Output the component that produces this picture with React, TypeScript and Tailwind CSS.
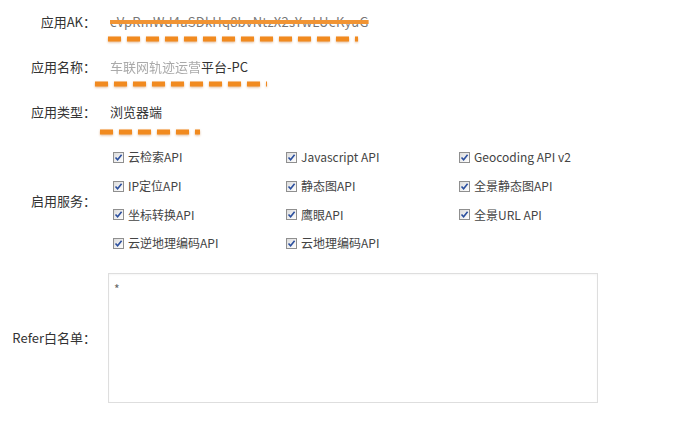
import type { ReactNode } from "react";

const services = [
  "云检索API",
  "Javascript API",
  "Geocoding API v2",
  "IP定位API",
  "静态图API",
  "全景静态图API",
  "坐标转换API",
  "鹰眼API",
  "全景URL API",
  "云逆地理编码API",
  "云地理编码API",
];

export default function App() {
  return (
    <main
      className="min-h-screen bg-white text-[13px] text-[#333] pt-[12px]"
      style={{ fontFamily: '"Microsoft YaHei", "Noto Sans CJK SC", "Liberation Sans", sans-serif' }}
    >
      <Row label="应用AK：">
        <span className="text-[#777] line-through decoration-[#f19433] decoration-[4px] tracking-[0.2px]">
          cVpRmWd4aSDkHq8bvNtzX2sYwLUeKyuG
        </span>
      </Row>
      <Dashes from={108} to={358} />

      <div className="mt-[11px]">
        <Row label="应用名称：">
          <span className="text-[#aaa] blur-[0.5px]">车联网轨迹运营</span>
          <span>平台-PC</span>
        </Row>
      </div>
      <Dashes from={95} to={267} />

      <div className="mt-[11px]">
        <Row label="应用类型：">
          <span>浏览器端</span>
        </Row>
      </div>
      <div className="mt-[3px]">
        <Dashes from={100} to={200} />
      </div>

      <div className="flex items-center mt-[4px]">
        <div className="w-[96px] shrink-0 text-right">启用服务：</div>
        <div className="ml-[17px] grid grid-cols-[173px_173px_173px]">
          {services.map((s) => (
            <label key={s} className="flex items-center h-[28.7px] text-[12px] text-[#444]">
              <CheckBox />
              <span className="ml-[4px]">{s}</span>
            </label>
          ))}
        </div>
      </div>

      <div className="flex items-center mt-[15px]">
        <div className="w-[96px] shrink-0 text-right">Refer白名单：</div>
        <textarea
          readOnly
          defaultValue="*"
          className="ml-[12px] w-[490px] h-[130px] resize-none border border-[#dedede] px-[5px] py-[6px] text-[12px] text-[#666] outline-none shadow-[inset_0_1px_2px_rgba(0,0,0,0.04)]"
        />
      </div>
    </main>
  );
}

function Row({ label, children }: { label: string; children: ReactNode }) {
  return (
    <div className="flex items-center h-[20px]">
      <div className="w-[96px] shrink-0 text-right">{label}</div>
      <div className="ml-[14px] whitespace-nowrap">{children}</div>
    </div>
  );
}

function Dashes({ from, to }: { from: number; to: number }) {
  return (
    <svg width="675" height="14" className="block drop-shadow-[0_1px_1px_rgba(190,100,20,0.45)]">
      <line
        x1={from}
        y1={7}
        x2={to}
        y2={7}
        stroke="#f18a1f"
        strokeWidth={5}
        strokeDasharray="13 6"
      />
    </svg>
  );
}

function CheckBox() {
  return (
    <span className="w-[11px] h-[11px] shrink-0 border border-[#8f8f8f] bg-gradient-to-br from-[#dcdcdc] to-white flex items-center justify-center">
      <svg width="9" height="9" viewBox="0 0 9 9">
        <path d="M1.5 4.5 L3.6 6.8 L7.6 1.8" fill="none" stroke="#2b4f9e" strokeWidth={1.6} />
      </svg>
    </span>
  );
}
